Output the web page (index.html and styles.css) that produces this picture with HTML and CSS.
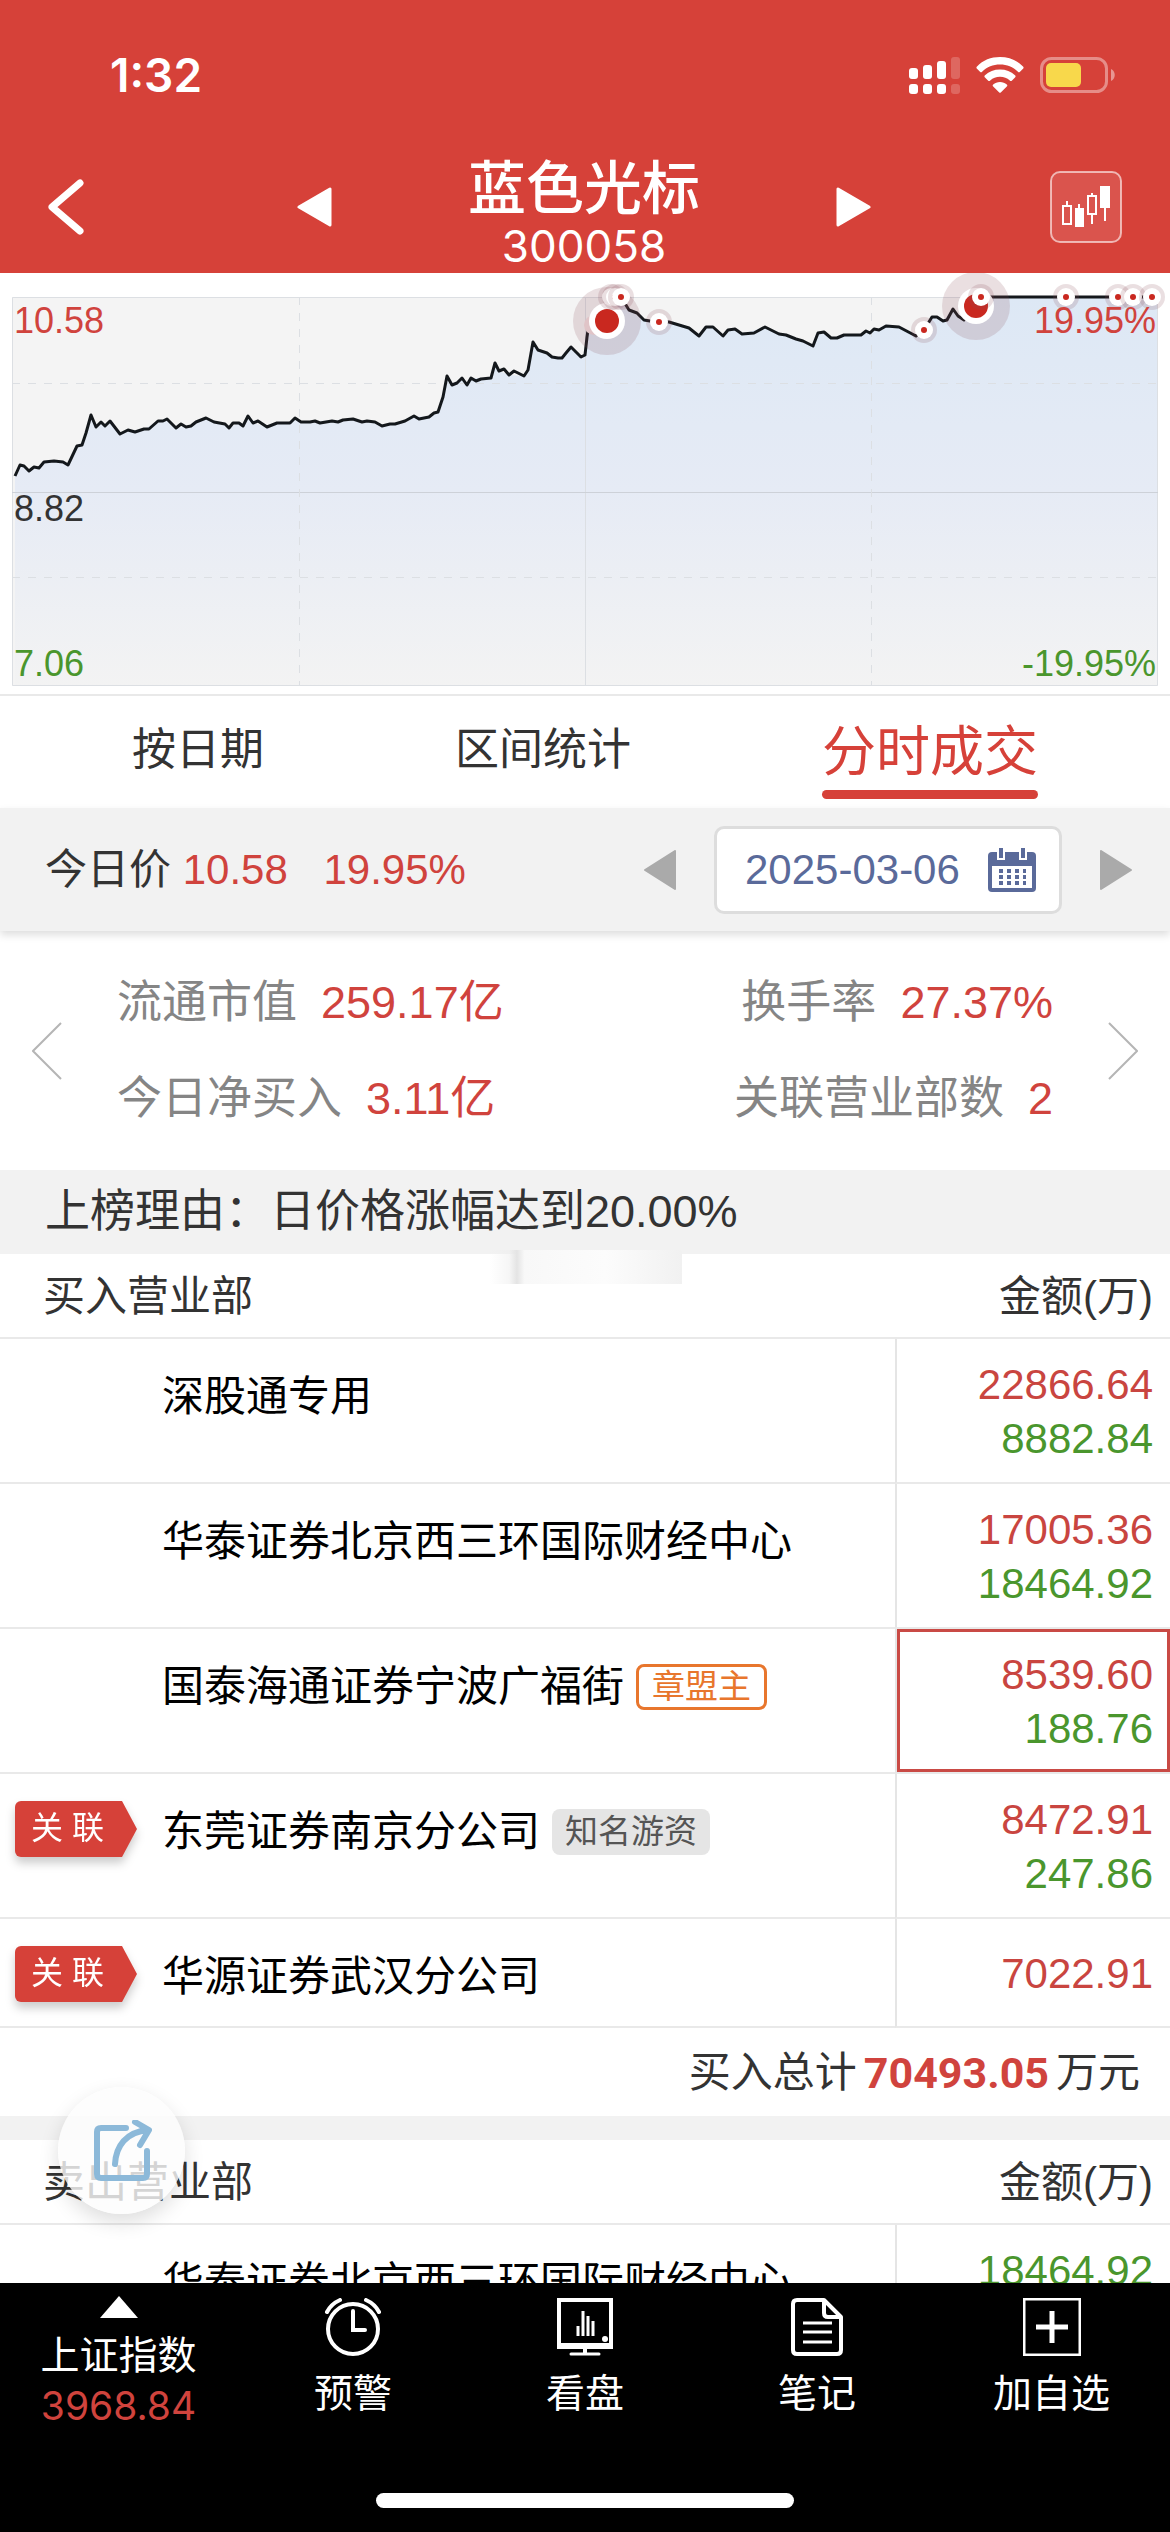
FILE: index.html
```html
<!DOCTYPE html>
<html lang="zh-CN">
<head>
<meta charset="utf-8">
<meta name="viewport" content="width=device-width, initial-scale=1">
<title>蓝色光标 300058</title>
<link rel="stylesheet" href="styles.css">
</head>
<body>
<header class="top">
  <div class="status">
    <span class="clock">1:32</span>
    <div class="status-icons">
      <svg width="52" height="38" viewBox="0 0 52 38" fill="#fff" aria-hidden="true">
        <rect x="1" y="12" width="9" height="11" rx="3"/><rect x="15" y="9" width="9" height="14" rx="3"/><rect x="29" y="5" width="9" height="18" rx="3"/><rect x="43" y="1" width="9" height="22" rx="3" opacity=".2"/>
        <rect x="1" y="28" width="9" height="10" rx="3"/><rect x="15" y="28" width="9" height="10" rx="3"/><rect x="29" y="28" width="9" height="10" rx="3"/><rect x="43" y="28" width="9" height="10" rx="3" opacity=".2"/>
      </svg>
      <svg width="48" height="36" viewBox="0 0 48 36" fill="#fff" aria-hidden="true">
        <path d="M24 0c9 0 17 3 23 9.500c.8.800.8 1.500 0 2.200l-3 3c-.7.700-1.400.700-2.100 0C37 10 31 7.500 24 7.500S11 10 6.100 14.700c-.7.700-1.400.700-2.100 0l-3-3c-.8-.7-.8-1.400 0-2.200C7 3 15 0 24 0z"/>
        <path d="M24 12.500c6 0 11 2 15 5.700c.8.700.8 1.500 0 2.200l-3 3c-.7.700-1.500.700-2.200 0C31 21 28 19.700 24 19.700S17 21 14.200 23.400c-.7.700-1.500.700-2.200 0l-3-3c-.8-.7-.8-1.500 0-2.200C13 14.500 18 12.500 24 12.500z"/>
        <path d="M24 25c2.700 0 5 .9 6.800 2.400c.7.700.7 1.300 0 2L25 35.200c-.7.700-1.300.700-2 0l-5.800-5.800c-.7-.7-.7-1.300 0-2C19 25.900 21.300 25 24 25z"/>
      </svg>
      <svg width="76" height="36" viewBox="0 0 76 36" aria-hidden="true">
        <rect x="1.500" y="1.500" width="65" height="33" rx="10" fill="none" stroke="#fff" stroke-opacity=".4" stroke-width="3"/>
        <rect x="6" y="6" width="35" height="24" rx="5" fill="#f8d84b"/>
        <path d="M71 12c5 2 5 10 0 12z" fill="#fff" fill-opacity=".45"/>
      </svg>
    </div>
  </div>
  <nav class="nav">
    <button class="icon-btn" aria-label="返回"><svg width="38" height="56" viewBox="0 0 38 56"><path d="M34 4L6 28l28 24" fill="none" stroke="#fff" stroke-width="7" stroke-linecap="round" stroke-linejoin="round"/></svg></button>
    <div class="switcher">
      <button class="icon-btn" aria-label="上一只"><svg width="36" height="40" viewBox="0 0 36 40"><path d="M34 2v36L3 20z" fill="#fff" stroke="#fff" stroke-width="3" stroke-linejoin="round"/></svg></button>
      <div class="stock">
        <h1 class="stock-name">蓝色光标</h1>
        <span class="stock-code">300058</span>
      </div>
      <button class="icon-btn" aria-label="下一只"><svg width="36" height="40" viewBox="0 0 36 40"><path d="M2 2v36l31-18z" fill="#fff" stroke="#fff" stroke-width="3" stroke-linejoin="round"/></svg></button>
    </div>
    <button class="icon-btn nav-end" aria-label="K线"><svg width="72" height="72" viewBox="0 0 72 72"><rect x="1" y="1" width="70" height="70" rx="9" fill="#fff" fill-opacity=".1" stroke="#fff" stroke-opacity=".6" stroke-width="2"/><g fill="none" stroke="#fff" stroke-width="2"><path d="M17 30v5M29 33v5M42 22v3M42 43v10M55 35v15"/><rect x="13" y="35" width="8" height="18"/><rect x="38" y="25" width="8" height="18"/></g><path d="M25 37h9v19h-9zM50 15h10v22H50z" fill="#fff"/></svg></button>
  </nav>
</header>

<main class="content">
  <section class="chart">
    <svg class="chart-svg" viewBox="0 0 1170 421" role="img" aria-label="分时走势">
      <defs>
        <linearGradient id="area" gradientUnits="userSpaceOnUse" x1="0" y1="24" x2="0" y2="413"><stop offset="0" stop-color="#dde8f5"/><stop offset=".5" stop-color="#e6ebf5"/><stop offset="1" stop-color="#f3f3f3"/></linearGradient>
        <g id="dot"><circle r="13" fill="#8a5058" fill-opacity=".18"/><circle r="9" fill="#fff"/><circle r="3" fill="#c9281f"/></g>
        <g id="dot-big"><circle r="34" fill="#8a5058" fill-opacity=".18"/><circle r="18" fill="#fff"/><circle r="12" fill="#c9281f"/></g>
      </defs>
      <rect x="12" y="24" width="1146" height="389" fill="#f4f4f4"/>
      <path fill="url(#area)" d="M15 413V203L20 192L24 193L29 198L34 194L39 195L44 189L54 188L63 189L68 192L77 173L82 172L86 160L91 142L96 154L101 149L105 153L110 148L120 161L128 157L135 159L144 156L158 148L167 146L176 155L191 153L206 145L225 151L229 155L239 150L243 153L248 143L253 150L267 154L277 150L290 150L295 145L301 149L353 146L375 149L382 153L405 148L414 143L429 144L438 139L443 124L447 103L452 112L462 105L467 112L471 105L491 105L495 90L499 98L509 102L524 103L528 97L533 69L538 77L558 85L566 80L571 74L581 84L585 82L589 50L606 48L612 24L621 24L629 37L644 47L669 49L689 55L699 63L706 54L713 54L723 63L728 57L735 56L742 61L765 54L813 73L818 60L824 59L831 65L844 62L861 62L886 53L899 54L916 63L932 44L943 48L953 36L964 47L978 32L981 24H1158V413z"/>
      <g fill="none" stroke="#dcdfe3" stroke-width="1">
        <path d="M12.500 24.500h1145v388H12.500zM585.500 24v389"/><path d="M12 219.500h1146" stroke="#cdd1d8"/>
        <path stroke-dasharray="8 8" d="M12 110.500h1146M12 304.500h1146M299.500 24v389M871.500 24v389"/>
      </g>
      <path fill="none" stroke="#14181c" stroke-width="3" stroke-linejoin="round" d="M15 203L20 192L24 193L29 198L34 194L39 195L44 189L54 188L63 189L68 192L77 173L82 172L86 160L91 142L96 154L101 149L105 153L110 148L120 161L128 157L135 159L144 156L149 156L158 148L163 148L167 146L176 155L181 151L186 154L191 153L196 149L206 145L214 149L225 151L229 155L233 150L239 150L243 153L248 143L253 150L258 148L267 154L277 150L290 150L295 145L301 149L310 149L315 148L320 150L332 148L338 149L343 147L353 146L362 149L367 148L375 149L382 153L390 151L395 151L405 148L414 143L419 146L429 144L434 140L438 139L443 124L447 103L452 112L457 110L462 105L467 112L471 105L476 108L481 106L491 105L495 90L499 98L504 96L509 102L514 98L524 103L528 97L533 69L538 77L547 80L552 84L558 85L562 85L566 80L571 74L581 84L585 82L587 64L589 50L606 48L612 24L621 24L629 37L637 40L644 47L650 48L669 49L689 55L699 63L706 54L713 54L723 63L728 57L735 56L742 61L754 60L765 54L779 61L786 62L796 66L803 68L813 73L818 60L824 59L831 65L837 65L844 62L861 62L866 58L870 60L874 56L879 57L886 53L899 54L916 63L924 57L932 44L937 44L943 48L947 47L953 36L958 43L964 47L978 32L981 24H1155"/>
      <circle cx="594" cy="52" r="10" fill="#f3dfe0"/>
      <use href="#dot-big" x="607" y="48"/><use href="#dot" x="611" y="24"/><use href="#dot" x="615" y="24"/><use href="#dot" x="621" y="24"/>
      <use href="#dot" x="659" y="49"/><use href="#dot" x="924" y="57"/>
      <use href="#dot-big" x="976" y="33"/><use href="#dot" x="981" y="24"/><use href="#dot" x="1066" y="24"/><use href="#dot" x="1118" y="24"/><use href="#dot" x="1133" y="24"/><use href="#dot" x="1152" y="24"/>
    </svg>
    <div class="chart-labels">
      <div class="label-row up"><span>10.58</span><span>19.95%</span></div>
      <div class="label-row label-mid">8.82</div>
      <div class="label-row down"><span>7.06</span><span>-19.95%</span></div>
    </div>
  </section>

  <nav class="tabs">
    <a class="tab" href="#date">按日期</a>
    <a class="tab" href="#range">区间统计</a>
    <a class="tab tab-active" href="#intraday" aria-current="page">分时成交</a>
  </nav>

  <section class="daybar">
    <p class="today">今日价 <span class="red">10.58</span> <span class="red pct">19.95%</span></p>
    <div class="datepick">
      <button class="icon-btn" aria-label="前一天"><svg width="32" height="40" viewBox="0 0 32 40"><path d="M31 1v38L1 20z" fill="#aaa" stroke="#aaa" stroke-width="2" stroke-linejoin="round"/></svg></button>
      <label class="datebox">
        <input class="date-input" type="text" value="2025-03-06" aria-label="日期" readonly>
        <svg width="50" height="46" viewBox="0 0 50 46" aria-hidden="true"><rect x="1" y="5" width="48" height="40" rx="4" fill="#5a6a9a"/><path d="M5 19h40v22H5z" fill="#fff"/><path d="M11 0h6v12h-6zM33 0h6v12h-6z" fill="#5a6a9a" stroke="#fff" stroke-width="2"/><path d="M12 24h27M12 30h27M12 36h27" stroke="#5a6a9a" stroke-width="4" stroke-dasharray="4 4"/></svg>
      </label>
      <button class="icon-btn" aria-label="后一天"><svg width="32" height="40" viewBox="0 0 32 40"><path d="M1 1v38l30-19z" fill="#aaa" stroke="#aaa" stroke-width="2" stroke-linejoin="round"/></svg></button>
    </div>
  </section>

  <section class="stats">
    <button class="icon-btn" aria-label="上一页"><svg width="30" height="58" viewBox="0 0 30 58"><path d="M29 1L1 29l28 28" fill="none" stroke="#b5b5b5" stroke-width="2"/></svg></button>
    <dl class="stat-grid">
      <div class="stat"><dt>流通市值</dt><dd>259.17亿</dd></div>
      <div class="stat stat-end"><dt>换手率</dt><dd>27.37%</dd></div>
      <div class="stat"><dt>今日净买入</dt><dd>3.11亿</dd></div>
      <div class="stat stat-end"><dt>关联营业部数</dt><dd>2</dd></div>
    </dl>
    <button class="icon-btn" aria-label="下一页"><svg width="30" height="58" viewBox="0 0 30 58"><path d="M1 1l28 28L1 57" fill="none" stroke="#b5b5b5" stroke-width="2"/></svg></button>
  </section>

  <p class="reason">上榜理由：日价格涨幅达到20.00%<i class="smudge"></i></p>

  <table class="seats">
    <colgroup><col class="col-mark"><col><col class="col-amount"></colgroup>
    <thead><tr><th class="th-name" colspan="2">买入营业部</th><th class="th-amount">金额(万)</th></tr></thead>
    <tbody>
      <tr><td class="mark"></td><td class="name">深股通专用</td><td class="amount"><span class="buy">22866.64</span><span class="sell">8882.84</span></td></tr>
      <tr><td class="mark"></td><td class="name">华泰证券北京西三环国际财经中心</td><td class="amount"><span class="buy">17005.36</span><span class="sell">18464.92</span></td></tr>
      <tr><td class="mark"></td><td class="name"><div class="name-line">国泰海通证券宁波广福街<span class="badge badge-orange">章盟主</span></div></td><td class="amount amount-picked"><span class="buy">8539.60</span><span class="sell">188.76</span></td></tr>
      <tr><td class="mark"><span class="linked"><span class="linked-face">关 联</span></span></td><td class="name"><div class="name-line">东莞证券南京分公司<span class="badge badge-grey">知名游资</span></div></td><td class="amount"><span class="buy">8472.91</span><span class="sell">247.86</span></td></tr>
      <tr><td class="mark"><span class="linked"><span class="linked-face">关 联</span></span></td><td class="name">华源证券武汉分公司</td><td class="amount amount-single"><span class="buy">7022.91</span></td></tr>
    </tbody>
  </table>
  <p class="total">买入总计<strong class="total-num">70493.05</strong>万元</p>

  <table class="seats">
    <colgroup><col class="col-mark"><col><col class="col-amount"></colgroup>
    <thead><tr><th class="th-name" colspan="2">卖出营业部</th><th class="th-amount">金额(万)</th></tr></thead>
    <tbody>
      <tr><td class="mark"></td><td class="name">华泰证券北京西三环国际财经中心</td><td class="amount"><span class="sell">18464.92</span></td></tr>
    </tbody>
  </table>
</main>

<footer class="bottom">
  <button class="share" aria-label="分享"><svg width="60" height="62" viewBox="0 0 60 62" fill="none" stroke="#8cb9d9" stroke-width="6" stroke-linecap="round" stroke-linejoin="round"><path d="M34 8H9q-4 0-4 4v42q0 4 4 4h42q4 0 4-4V31"/><path d="M23 44C24 26 34 12 56 10M43 2l14 8-9 15"/></svg></button>
  <nav class="toolbar">
    <a class="tool tool-index" href="#index"><svg width="38" height="22" viewBox="0 0 38 22"><path d="M19 0l19 22H0z" fill="#fff"/></svg><span>上证指数</span><span class="index-value">3968.84</span></a>
    <a class="tool" href="#alert"><svg width="58" height="58" viewBox="0 0 58 58" fill="none" stroke="#fff" stroke-width="4" stroke-linecap="round"><circle cx="29" cy="31" r="25"/><path d="M29 13v19h12M3 14Q7 6 16 2M55 14Q51 6 42 2"/></svg><span>预警</span></a>
    <a class="tool" href="#watch"><svg width="58" height="58" viewBox="0 0 58 58" fill="none" stroke="#fff" stroke-width="4"><path d="M3 2h52v47H3zM3 47h52M29 50v6"/><path d="M15 56h28" stroke-width="3" stroke-linecap="round"/><path d="M22 38V28M27 38V13M32 38V18M37 38V23" stroke-width="3"/><circle cx="49" cy="41" r="3" fill="#fff" stroke="none"/></svg><span>看盘</span></a>
    <a class="tool" href="#notes"><svg width="58" height="58" viewBox="0 0 58 58" fill="none" stroke="#fff" stroke-width="4" stroke-linejoin="round"><path d="M9 2h27l17 17v33q0 4-4 4H9q-4 0-4-4V6q0-4 4-4zM36 2v13q0 4 4 4h13"/><path d="M15 25h29M15 34h29M15 44h29" stroke-width="3"/></svg><span>笔记</span></a>
    <a class="tool" href="#add"><svg width="58" height="58" viewBox="0 0 58 58" fill="none" stroke="#fff"><rect x="1" y="1" width="56" height="56" stroke-width="3"/><path d="M29 13v32M13 29h32" stroke-width="5"/></svg><span>加自选</span></a>
  </nav>
  <div class="home"></div>
</footer>
</body>
</html>
```
FILE: styles.css
```css
* { box-sizing: border-box; }
body {
  margin: 0;
  height: 100vh;
  display: flex;
  flex-direction: column;
  background: #fff;
  color: #333;
  font-family: "Liberation Sans", "Noto Sans CJK SC", sans-serif;
  font-size: 42px;
  line-height: 54px;
}
h1, p, dl, dd { margin: 0; }
a { color: inherit; text-decoration: none; }
svg { display: block; flex: none; }
.icon-btn { border: 0; padding: 0; background: none; }

.top { background: #d64139; color: #fff; }
.status {
  display: flex;
  justify-content: space-between;
  align-items: center;
  height: 141px;
  padding: 8px 54px 0 110px;
}
.clock { font: 600 46px/54px Inter, sans-serif; }
.status-icons { display: flex; align-items: center; gap: 16px; }
.nav {
  display: grid;
  grid-template-columns: 1fr auto 1fr;
  align-items: center;
  height: 132px;
  padding: 0 48px 0 46px;
}
.nav .icon-btn { justify-self: start; }
.nav .nav-end { justify-self: end; }
.switcher { display: flex; align-items: center; gap: 136px; }
.stock {
  display: flex;
  flex-direction: column;
  align-items: center;
  padding-top: 16px;
}
.stock-name { font-size: 58px; line-height: 62px; font-weight: 500; }
.stock-code { font: 400 44px/52px Inter, sans-serif; }

.content { flex: 1; min-height: 0; overflow-y: auto; scrollbar-width: none; }

.chart { position: relative; border-bottom: 2px solid #e9e9e9; }
.chart-svg { width: 100%; }
.chart-labels {
  position: absolute;
  inset: 26px 14px 8px;
  display: flex;
  flex-direction: column;
  justify-content: space-between;
  font-size: 36px;
  line-height: 44px;
}
.label-row { display: flex; justify-content: space-between; }
.label-mid { padding-top: 32px; }
.up { color: #d0433d; }
.down { color: #4a962d; }

.tabs {
  display: flex;
  justify-content: space-between;
  height: 112px;
  padding: 24px 132px 0;
  font-size: 44px;
  line-height: 60px;
}
.tab-active { color: #d64139; font-size: 54px; line-height: 64px; }
.tab-active::after {
  content: "";
  display: block;
  height: 9px;
  margin-top: 6px;
  border-radius: 5px;
  background: #d64139;
}

.daybar {
  position: relative;
  display: flex;
  justify-content: space-between;
  align-items: center;
  height: 123px;
  padding: 0 38px 0 45px;
  background: #f2f2f2;
  box-shadow: 0 4px 8px #0002;
}
.red { color: #d0433d; }
.pct { margin-left: 24px; }
.datepick { display: flex; align-items: center; gap: 38px; }
.datebox {
  display: flex;
  align-items: center;
  justify-content: space-between;
  width: 348px;
  height: 88px;
  padding: 0 22px 0 28px;
  border: 3px solid #ddd;
  border-radius: 10px;
  background: #fff;
}
.date-input {
  width: 224px;
  border: 0;
  padding: 0;
  background: none;
  color: #5a6a9a;
  font: inherit;
}

.stats {
  display: flex;
  align-items: center;
  justify-content: space-between;
  height: 239px;
  padding: 0 32px;
}
.stat-grid {
  flex: 1;
  display: grid;
  grid-template-columns: 1fr 1fr;
  row-gap: 42px;
  padding: 0 55px;
  font-size: 45px;
}
.stat { display: flex; gap: 24px; }
.stat-end { justify-content: flex-end; }
.stat dt { color: #858585; }
.stat dd { color: #d0433d; }

.reason {
  position: relative;
  padding: 15px 45px;
  background: #f2f2f2;
  font-size: 45px;
}
.smudge {
  position: absolute;
  left: 490px;
  bottom: -30px;
  width: 192px;
  height: 34px;
  background: linear-gradient(90deg, #fff0, #eee8 10%, #e4e4e4 14%, #f8f8f8 18%, #fcfcfc 60%, #f1f1f1);
}

.seats { width: 100%; border-collapse: separate; border-spacing: 0; table-layout: fixed; }
.col-mark { width: 162px; }
.col-amount { width: 275px; }
.seats th {
  height: 85px;
  padding: 3px 0 0;
  border-bottom: 2px solid #e9e9e9;
  font-weight: 400;
}
.seats .th-name { padding-left: 43px; text-align: left; }
.seats .th-amount { padding-right: 17px; text-align: right; }
.seats td { padding: 0; border-bottom: 2px solid #e9e9e9; vertical-align: top; }
.seats .mark { padding: 27px 0 0 15px; }
.seats .name { padding: 31px 0 22px; color: #000; white-space: nowrap; }
.seats .amount {
  padding: 19px 17px 16px 0;
  border-left: 2px solid #e5e5e5;
  text-align: right;
}
.seats .amount-picked { box-shadow: inset 0 0 0 3px #c94a45; }
.seats .amount-single { padding: 28px 17px 25px 0; }
.buy, .sell { display: block; }
.buy { color: #c94540; }
.sell { color: #4a962d; }

.name-line { display: flex; align-items: center; gap: 12px; }
.badge { height: 46px; border-radius: 8px; font-size: 33px; line-height: 40px; }
.badge-orange { padding: 0 13px; border: 3px solid #e8762d; color: #e8762d; }
.badge-grey { padding: 3px 13px; background: #e5e5e5; color: #555; }
.linked { display: block; width: 122px; filter: drop-shadow(0 6px 5px #0003); }
.linked-face {
  display: block;
  height: 56px;
  padding-left: 16px;
  border-radius: 6px;
  background: #d64139;
  clip-path: polygon(0 0, 107px 0, 100% 50%, 107px 100%, 0 100%);
  color: #fff;
  font-size: 32px;
  line-height: 54px;
}

.total {
  display: flex;
  justify-content: flex-end;
  align-items: center;
  height: 112px;
  padding: 2px 30px 0 0;
  border-bottom: 24px solid #f2f2f2;
}
.total-num { margin: 0 7px; color: #d0433d; font: 700 43px/54px Roboto, sans-serif; }

.bottom { position: relative; background: #000; color: #fff; }
.share {
  position: absolute;
  left: 58px;
  top: -196px;
  display: grid;
  place-items: center;
  width: 127px;
  height: 127px;
  border: 0;
  border-radius: 50%;
  background: #fcfcfccc;
  box-shadow: 0 8px 20px #0002;
}
.toolbar {
  display: grid;
  grid-template-columns: 237px 1fr 1fr 1fr 237px;
  height: 210px;
  font-size: 39px;
}
.tool {
  display: flex;
  flex-direction: column;
  align-items: center;
  gap: 11px;
  padding-top: 15px;
}
.tool-index { gap: 0; padding-top: 13px; line-height: 50px; }
.tool-index svg { margin-bottom: 13px; }
.index-value { color: #d0433d; font: 400 39px/50px Inter, sans-serif; }
.home { width: 418px; height: 15px; margin: 0 auto 24px; border-radius: 8px; background: #fff; }
```
